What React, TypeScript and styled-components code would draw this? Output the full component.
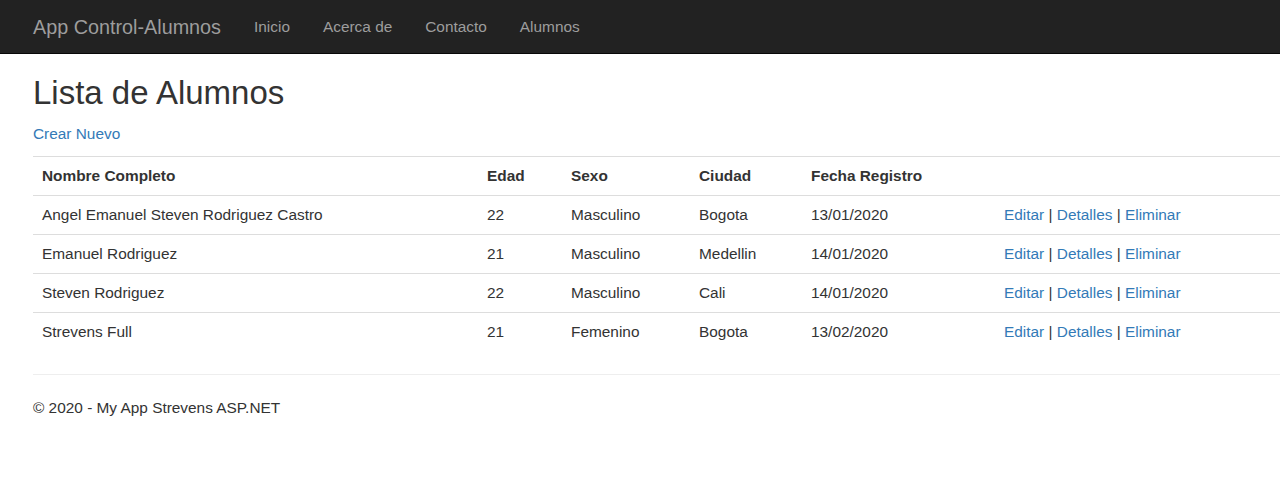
import React from "react";
import styled, { createGlobalStyle } from "styled-components";

const GlobalStyle = createGlobalStyle`
  html, body { margin: 0; padding: 0; }
  body {
    font-family: "Liberation Sans", Arial, Helvetica, sans-serif;
    font-size: 15.4px;
    line-height: 22px;
    color: #333;
    background: #fff;
    overflow-x: hidden;
  }
  * { box-sizing: border-box; }
`;

const Navbar = styled.nav`
  height: 54px;
  background: #222;
  border-bottom: 1px solid #080808;
  display: flex;
  align-items: center;
  padding-left: 33px;
`;

const Brand = styled.a`
  font-size: 19.8px;
  color: #9d9d9d;
  text-decoration: none;
  padding-right: 16.5px;
  line-height: 22px;
`;

const NavLink = styled.a`
  font-size: 15.4px;
  color: #9d9d9d;
  text-decoration: none;
  padding: 0 16.5px;
`;

const Body = styled.main`
  padding: 0 0 0 33px;
`;

const Title = styled.h2`
  font-size: 33px;
  font-weight: 500;
  line-height: 36px;
  margin: 21px 0 12px;
`;

const Link = styled.a`
  color: #337ab7;
  text-decoration: none;
`;

const Para = styled.p`
  margin: 0 0 11px;
`;

const Table = styled.table`
  border-collapse: collapse;
  width: 1247px;
  table-layout: fixed;
  margin-bottom: 22px;
`;

const Th = styled.th<{ $w: number }>`
  width: ${(p) => p.$w}px;
  text-align: left;
  font-weight: bold;
  padding: 8px 9px;
  border-top: 1px solid #ddd;
  border-bottom: 1px solid #ddd;
  height: 39px;
`;

const Td = styled.td`
  padding: 8px 9px;
  border-top: 1px solid #ddd;
  height: 39px;
  vertical-align: top;
`;

const Actions = styled(Td)`
  color: #333;
  white-space: nowrap;
`;

const Hr = styled.hr`
  border: 0;
  border-top: 1px solid #eee;
  margin: 0 0 22px;
`;

const Footer = styled.footer`
  p { margin: 0; }
`;

const rows = [
  ["Angel Emanuel Steven Rodriguez Castro", "22", "Masculino", "Bogota", "13/01/2020"],
  ["Emanuel Rodriguez", "21", "Masculino", "Medellin", "14/01/2020"],
  ["Steven Rodriguez", "22", "Masculino", "Cali", "14/01/2020"],
  ["Strevens Full", "21", "Femenino", "Bogota", "13/02/2020"],
];

export default function App() {
  return (
    <>
      <GlobalStyle />
      <Navbar>
        <Brand href="#">App Control-Alumnos</Brand>
        <NavLink href="#">Inicio</NavLink>
        <NavLink href="#">Acerca de</NavLink>
        <NavLink href="#">Contacto</NavLink>
        <NavLink href="#">Alumnos</NavLink>
      </Navbar>
      <Body>
        <Title>Lista de Alumnos</Title>
        <Para>
          <Link href="#">Crear Nuevo</Link>
        </Para>
        <Table>
          <thead>
            <tr>
              <Th $w={445}>Nombre Completo</Th>
              <Th $w={84}>Edad</Th>
              <Th $w={128}>Sexo</Th>
              <Th $w={112}>Ciudad</Th>
              <Th $w={193}>Fecha Registro</Th>
              <Th $w={285}></Th>
            </tr>
          </thead>
          <tbody>
            {rows.map((r) => (
              <tr key={r[0]}>
                {r.map((c, i) => (
                  <Td key={i}>{c}</Td>
                ))}
                <Actions>
                  <Link href="#">Editar</Link> | <Link href="#">Detalles</Link> |{" "}
                  <Link href="#">Eliminar</Link>
                </Actions>
              </tr>
            ))}
          </tbody>
        </Table>
        <Hr />
        <Footer>
          <p>© 2020 - My App Strevens ASP.NET</p>
        </Footer>
      </Body>
    </>
  );
}
